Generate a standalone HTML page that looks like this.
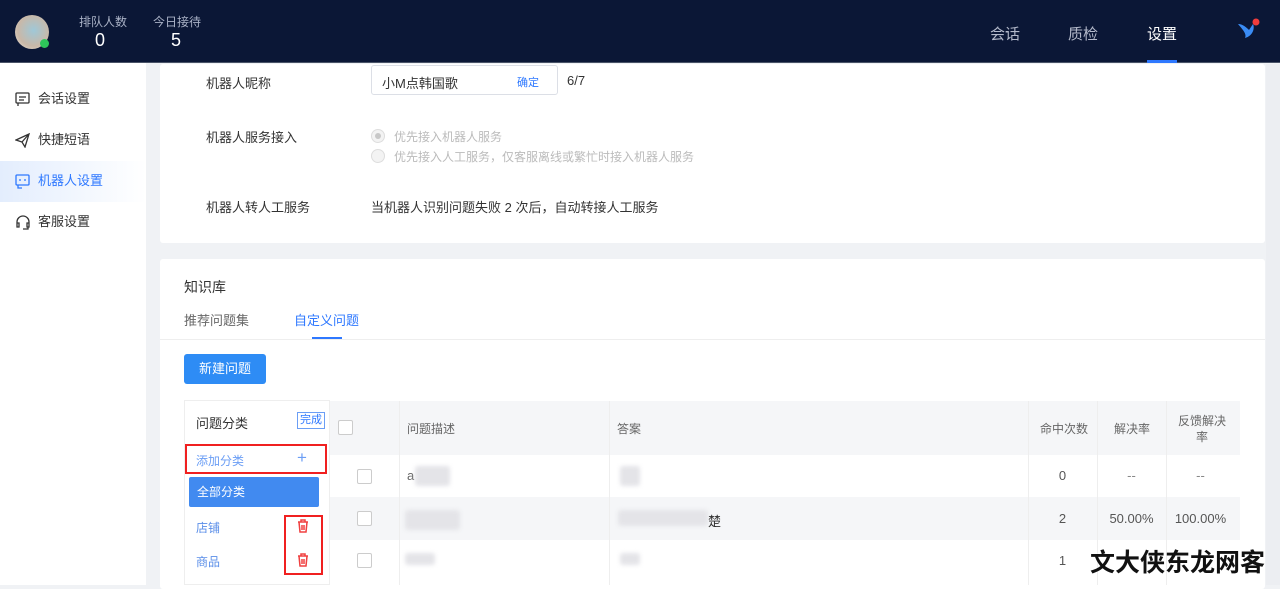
<!DOCTYPE html>
<html><head><meta charset="utf-8"><style>
*{box-sizing:border-box;margin:0;padding:0}
body{width:1280px;height:585px;overflow:hidden;background:#f0f2f5;font-family:"Liberation Sans","Noto Sans CJK SC",sans-serif;font-size:13px;color:#333;position:relative}
.a{position:absolute}
.hdr{left:0;top:0;width:1280px;height:63px;background:#0b1736;border-bottom:1px solid #4a5468}
.side{left:0;top:63px;width:146px;height:522px;background:#fff}
.mi{left:0;width:146px;height:40px;line-height:40px;padding-left:38px;font-size:13px;color:#333}
.card{background:#fff;border-radius:3px}
.lbl{font-size:13px;color:#333}
.th{background:#f5f6f8;color:#666;font-size:12px}
.blur{background:#e4e4e8;filter:blur(2px);border-radius:3px}
.cb{width:15px;height:15px;border:1px solid #ccc;border-radius:2px;background:#fff}
</style></head><body>
<div class="a hdr"></div>
<div class="a" style="left:15px;top:15px;width:34px;height:34px;border-radius:50%;background:radial-gradient(circle at 55% 45%,#9fc8d8,#c9b8a8 60%,#e8e2dc)"></div>
<div class="a" style="left:40px;top:39px;width:9px;height:9px;border-radius:50%;background:#2ec55a"></div>
<div class="a" style="left:79px;top:13px;color:#aab2c6;font-size:12px">排队人数</div>
<div class="a" style="left:95px;top:30px;color:#fff;font-size:18px">0</div>
<div class="a" style="left:153px;top:13px;color:#aab2c6;font-size:12px">今日接待</div>
<div class="a" style="left:171px;top:30px;color:#fff;font-size:18px">5</div>
<div class="a" style="left:990px;top:23px;color:#b4bacb;font-size:15px">会话</div>
<div class="a" style="left:1068px;top:23px;color:#b4bacb;font-size:15px">质检</div>
<div class="a" style="left:1147px;top:23px;color:#fff;font-size:15px">设置</div>
<div class="a" style="left:1147px;top:60px;width:30px;height:3px;background:#2e78ff"></div>
<svg class="a" style="left:1237px;top:18px" width="24" height="22" viewBox="0 0 24 22"><path d="M1 6 C6 6 10 10 12 12 L16 6 C18 10 16 18 8 20 C10 16 6 12 1 6Z" fill="#3a8cf5"/><circle cx="19" cy="4" r="3.5" fill="#f03c3c"/></svg>

<div class="a side"></div>
<div class="a" style="left:0;top:161px;width:146px;height:41px;background:linear-gradient(90deg,#e3edfd,#fff)"></div>
<div class="a mi" style="top:79px">会话设置</div>
<div class="a mi" style="top:120px">快捷短语</div>
<div class="a mi" style="top:161px;color:#2e78ff">机器人设置</div>
<div class="a mi" style="top:202px">客服设置</div>
<svg class="a" style="left:15px;top:92px" width="16" height="15" fill="none" stroke="#333" stroke-width="1.3"><rect x="1" y="1" width="13" height="10" rx="1"/><path d="M4 5h7M4 8h5M3 11v3"/></svg>
<svg class="a" style="left:15px;top:133px" width="16" height="15" fill="none" stroke="#333" stroke-width="1.3"><path d="M1 7 L14 1 L10 14 L7 9 Z M7 9 L14 1"/></svg>
<svg class="a" style="left:15px;top:174px" width="16" height="15" fill="none" stroke="#2e78ff" stroke-width="1.3"><rect x="1" y="1" width="13" height="10" rx="1"/><path d="M5 5v2M10 5v2M3 11v3h4"/></svg>
<svg class="a" style="left:15px;top:215px" width="16" height="15" fill="none" stroke="#333" stroke-width="1.3"><path d="M2 9V7a6 6 0 0 1 12 0v2M2 8h2v4H2zM12 8h2v4h-2zM13 12v2H8"/></svg>

<div class="a card" style="left:160px;top:64px;width:1105px;height:179px"></div>
<div class="a lbl" style="left:206px;top:73px">机器人昵称</div>
<div class="a" style="left:371px;top:65px;width:187px;height:30px;border:1px solid #dcdfe6;border-radius:3px"></div>
<div class="a" style="left:382px;top:73px;font-size:13px">小M点韩国歌</div>
<div class="a" style="left:517px;top:74px;font-size:11px;color:#2e78ff">确定</div>
<div class="a" style="left:567px;top:73px">6/7</div>
<div class="a lbl" style="left:206px;top:127px">机器人服务接入</div>
<div class="a" style="left:371px;top:129px;width:14px;height:14px;border-radius:50%;border:1px solid #ddd;background:#f3f3f3"></div>
<div class="a" style="left:375px;top:133px;width:6px;height:6px;border-radius:50%;background:#c8c8c8"></div>
<div class="a" style="left:394px;top:128px;font-size:12px;color:#bbb">优先接入机器人服务</div>
<div class="a" style="left:371px;top:149px;width:14px;height:14px;border-radius:50%;border:1px solid #ddd;background:#f3f3f3"></div>
<div class="a" style="left:394px;top:148px;font-size:12px;color:#bbb">优先接入人工服务，仅客服离线或繁忙时接入机器人服务</div>
<div class="a lbl" style="left:206px;top:197px">机器人转人工服务</div>
<div class="a" style="left:371px;top:197px">当机器人识别问题失败 2 次后，自动转接人工服务</div>

<div class="a card" style="left:160px;top:259px;width:1105px;height:330px"></div>
<div class="a" style="left:184px;top:277px;font-size:14px">知识库</div>
<div class="a" style="left:184px;top:310px;color:#666">推荐问题集</div>
<div class="a" style="left:294px;top:310px;color:#2e78ff">自定义问题</div>
<div class="a" style="left:312px;top:337px;width:30px;height:2px;background:#2e78ff"></div>
<div class="a" style="left:160px;top:339px;width:1105px;height:1px;background:#eee"></div>
<div class="a" style="left:184px;top:354px;width:82px;height:30px;background:#2e8cf5;border-radius:3px;color:#fff;text-align:center;line-height:30px">新建问题</div>

<div class="a" style="left:184px;top:400px;width:146px;height:185px;border:1px solid #eee"></div>
<div class="a" style="left:196px;top:413px;font-size:13px">问题分类</div>
<div class="a" style="left:297px;top:412px;width:28px;height:17px;border:1px solid #6b9ef5;color:#2e78ff;font-size:11px;text-align:center;line-height:15px">完成</div>
<div class="a" style="left:185px;top:444px;width:142px;height:30px;border:2px solid #f02020"></div>
<div class="a" style="left:196px;top:452px;font-size:12px;color:#6b9ef5">添加分类</div>
<div class="a" style="left:297px;top:448px;font-size:17px;color:#6b9ef5">+</div>
<div class="a" style="left:189px;top:477px;width:130px;height:30px;background:#418af0;border-radius:2px;color:#fff;font-size:12px;line-height:30px;padding-left:8px">全部分类</div>
<div class="a" style="left:196px;top:519px;font-size:12px;color:#5a8ee8">店铺</div>
<div class="a" style="left:196px;top:553px;font-size:12px;color:#5a8ee8">商品</div>
<div class="a" style="left:284px;top:515px;width:39px;height:60px;border:2px solid #f02020"></div>
<svg class="a" style="left:297px;top:519px" width="12" height="14" fill="none" stroke="#f04040" stroke-width="1.5"><path d="M1 3h10M4 3V1h4v2M2 3l1 10h6l1-10M5 6v5M7 6v5"/></svg>
<svg class="a" style="left:297px;top:553px" width="12" height="14" fill="none" stroke="#f04040" stroke-width="1.5"><path d="M1 3h10M4 3V1h4v2M2 3l1 10h6l1-10M5 6v5M7 6v5"/></svg>

<div class="a th" style="left:330px;top:401px;width:910px;height:54px"></div>
<div class="a" style="left:330px;top:497px;width:910px;height:43px;background:#f5f6f8"></div>
<div class="a" style="left:399px;top:401px;width:1px;height:184px;background:#eee"></div>
<div class="a" style="left:609px;top:401px;width:1px;height:184px;background:#eee"></div>
<div class="a" style="left:1028px;top:401px;width:1px;height:184px;background:#eee"></div>
<div class="a" style="left:1097px;top:401px;width:1px;height:184px;background:#eee"></div>
<div class="a" style="left:1166px;top:401px;width:1px;height:184px;background:#eee"></div>
<div class="a cb" style="left:338px;top:420px"></div>
<div class="a" style="left:407px;top:420px;font-size:12px;color:#666">问题描述</div>
<div class="a" style="left:617px;top:420px;font-size:12px;color:#666">答案</div>
<div class="a" style="left:1040px;top:420px;font-size:12px;color:#666">命中次数</div>
<div class="a" style="left:1114px;top:420px;font-size:12px;color:#666">解决率</div>
<div class="a" style="left:1177px;top:413px;font-size:12px;color:#666;width:50px;text-align:center;line-height:16px">反馈解决率</div>
<div class="a cb" style="left:357px;top:469px"></div>
<div class="a cb" style="left:357px;top:511px"></div>
<div class="a cb" style="left:357px;top:553px"></div>
<div class="a" style="left:407px;top:468px;color:#666">a</div>
<div class="a blur" style="left:415px;top:466px;width:35px;height:20px"></div>
<div class="a blur" style="left:620px;top:466px;width:20px;height:20px"></div>
<div class="a blur" style="left:405px;top:510px;width:55px;height:20px"></div>
<div class="a blur" style="left:618px;top:510px;width:90px;height:16px"></div>
<div class="a" style="left:708px;top:511px;color:#333">楚</div>
<div class="a blur" style="left:405px;top:553px;width:30px;height:12px"></div>
<div class="a blur" style="left:620px;top:553px;width:20px;height:12px"></div>
<div class="a" style="left:1028px;top:468px;width:69px;text-align:center;color:#555;font-size:13px">0</div>
<div class="a" style="left:1097px;top:468px;width:69px;text-align:center;color:#888">--</div>
<div class="a" style="left:1166px;top:468px;width:69px;text-align:center;color:#888">--</div>
<div class="a" style="left:1028px;top:511px;width:69px;text-align:center;color:#555">2</div>
<div class="a" style="left:1097px;top:511px;width:69px;text-align:center;color:#555">50.00%</div>
<div class="a" style="left:1166px;top:511px;width:69px;text-align:center;color:#555">100.00%</div>
<div class="a" style="left:1028px;top:553px;width:69px;text-align:center;color:#555">1</div>
<div class="a" style="left:1090px;top:543px;font-size:25px;color:#111;font-weight:bold;text-shadow:0 0 2px #fff">文大侠东龙网客</div>
<div class="a" style="left:1266px;top:64px;width:14px;height:521px;background:#eceef2"></div>
</body></html>
